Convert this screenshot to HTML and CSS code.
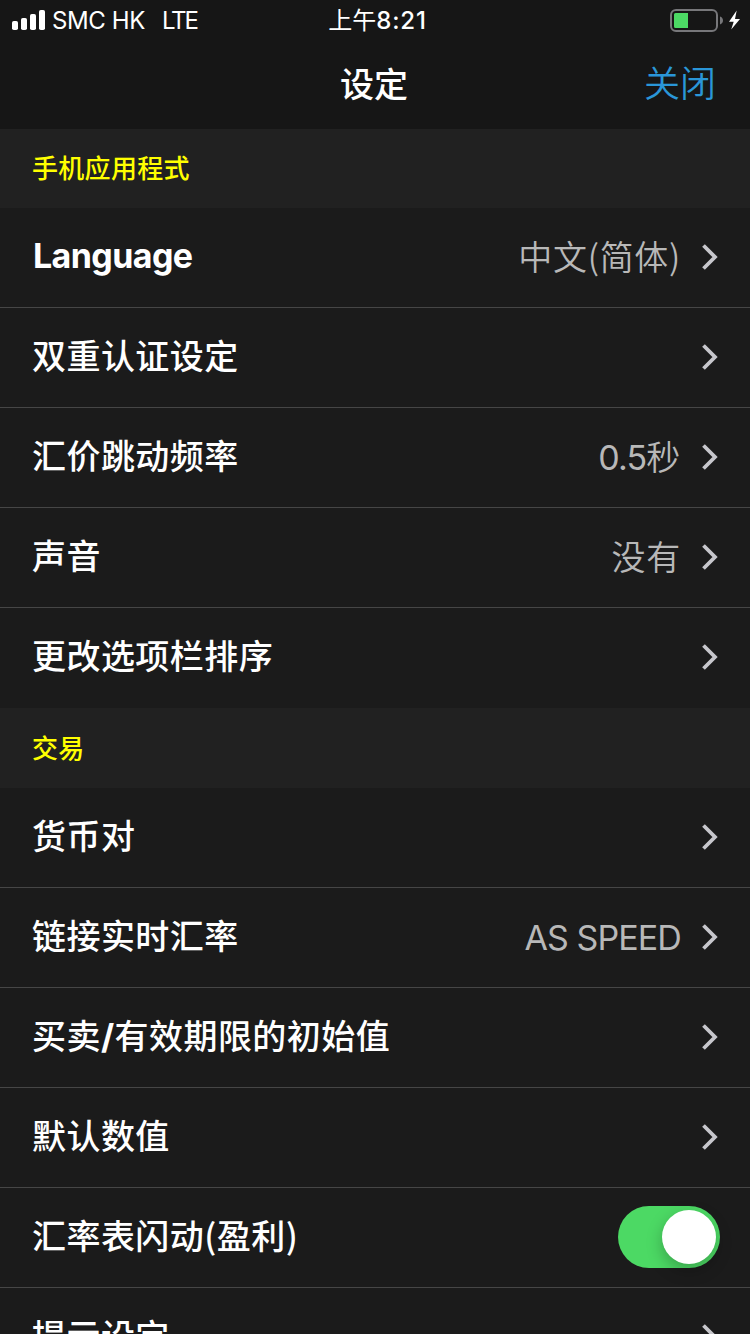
FILE: index.html
```html
<!DOCTYPE html>
<html lang="zh-CN">
<head>
<meta charset="utf-8">
<title>设定</title>
<link rel="stylesheet" href="styles.css">
</head>
<body>
<svg class="defs" width="0" height="0">
  <symbol id="chevron" viewBox="0 0 18 28"><path d="M2.500 2.500 14 14 2.500 25.500" fill="none" stroke="#c7c7cc" stroke-width="3.800"/></symbol>
</svg>
<div class="screen">
  <header class="header">
    <div class="status">
      <div class="status-left">
        <svg class="signal" width="34" height="20" viewBox="0 0 34 20" fill="#fff"><rect x="0" y="11" width="6" height="9" rx="1.800"/><rect x="9" y="8" width="6" height="12" rx="1.800"/><rect x="18" y="4" width="6" height="16" rx="1.800"/><rect x="27" y="0" width="6" height="20" rx="1.800"/></svg>
        <span class="carrier">SMC HK</span>
        <span class="network">LTE</span>
      </div>
      <div class="time"><span class="ampm">上午</span><span class="clock">8:21</span></div>
      <div class="status-right">
        <svg width="72" height="24" viewBox="0 0 72 24"><rect x="1" y="1" width="46" height="21" rx="5" fill="none" stroke="#77777a" stroke-width="2"/><path d="M4 5.500a1.500 1.500 0 0 1 1.500-1.500H18v15H5.500A1.500 1.500 0 0 1 4 17.500Z" fill="#4cd964"/><path d="M50 7.500c1.800.6 3 2.200 3 4s-1.200 3.400-3 4Z" fill="#77777a"/><path d="M66.700 1.500 59 12.700h4.700L61.200 20.500 70 10h-5Z" fill="#fff"/></svg>
      </div>
    </div>
    <div class="navbar">
      <span></span>
      <h1 class="title">设定</h1>
      <a class="close">关闭</a>
    </div>
  </header>
  <main>
    <h2 class="section first">手机应用程式</h2>
    <ul class="list">
      <li class="row"><span class="label latin">Language</span><span class="value">中文(简体)</span><svg class="chevron"><use href="#chevron"/></svg></li>
      <li class="row"><span class="label">双重认证设定</span><svg class="chevron"><use href="#chevron"/></svg></li>
      <li class="row"><span class="label">汇价跳动频率</span><span class="value"><span class="number">0.5</span>秒</span><svg class="chevron"><use href="#chevron"/></svg></li>
      <li class="row"><span class="label">声音</span><span class="value">没有</span><svg class="chevron"><use href="#chevron"/></svg></li>
      <li class="row"><span class="label">更改选项栏排序</span><svg class="chevron"><use href="#chevron"/></svg></li>
    </ul>
    <h2 class="section">交易</h2>
    <ul class="list">
      <li class="row"><span class="label">货币对</span><svg class="chevron"><use href="#chevron"/></svg></li>
      <li class="row"><span class="label">链接实时汇率</span><span class="value speed">AS SPEED</span><svg class="chevron"><use href="#chevron"/></svg></li>
      <li class="row"><span class="label">买卖<b class="slash">/</b>有效期限的初始值</span><svg class="chevron"><use href="#chevron"/></svg></li>
      <li class="row"><span class="label">默认数值</span><svg class="chevron"><use href="#chevron"/></svg></li>
      <li class="row"><span class="label">汇率表闪动(盈利)</span><span class="switch"><span class="knob"></span></span></li>
      <li class="row"><span class="label">提示设定</span><svg class="chevron"><use href="#chevron"/></svg></li>
    </ul>
  </main>
</div>
</body>
</html>
```
FILE: styles.css
```css
* { box-sizing: border-box; }
body { margin: 0; background: #1b1b1b; color: #fff; font-family: Inter, "Noto Sans CJK SC", sans-serif; }
.defs { position: absolute; }
.screen { width: 750px; height: 1334px; overflow: hidden; background: #1b1b1b; }
.header { height: 129px; background: #161616; }
.status { display: grid; grid-template-columns: 1fr auto 1fr; align-items: start; height: 40px; padding: 0 8px 0 12px; }
.status-left { display: flex; align-items: flex-start; font-size: 24px; line-height: 42px; font-weight: 400; }
.signal { flex: none; margin-top: 10px; }
.carrier { margin-left: 6px; letter-spacing: -0.4px; }
.network { margin-left: 17px; letter-spacing: -2.1px; }
.time { display: flex; align-items: center; padding-left: 1px; font-size: 24px; line-height: 42px; }
.clock { font-weight: 500; letter-spacing: 0.8px; }
.status-right { display: flex; justify-content: flex-end; padding-top: 9px; }
.navbar { display: grid; grid-template-columns: 1fr auto 1fr; align-items: start; height: 88px; padding: 0 34px; }
.title { margin: 0; padding: 0 2px 0 0; font-size: 34px; font-weight: 500; line-height: 90px; }
.close { justify-self: end; color: #2a96d8; font-family: "Noto Sans CJK SC", sans-serif; font-size: 36px; font-weight: 350; line-height: 82px; }
.section { margin: 0; height: 80px; padding-left: 32px; background: #212121; color: #ff0; font-size: 26px; font-weight: 500; line-height: 82px; letter-spacing: 0.3px; }
.first { height: 79px; line-height: 80px; }
.list { margin: 0; padding: 0; list-style: none; }
.row { display: flex; align-items: center; height: 100px; padding: 0 30px 2px 32px; border-bottom: 1px solid #464646; }
.row:last-child { border-bottom-color: transparent; }
.label { flex: 1; height: 97px; font-family: "Noto Sans CJK SC", sans-serif; font-size: 34px; font-weight: 500; line-height: 93px; letter-spacing: 0.45px; }
.latin { padding-left: 1px; font-family: Inter, sans-serif; font-weight: 650; letter-spacing: -0.6px; line-height: 96px; }
.slash { font-family: Inter, sans-serif; }
.value { margin-right: 20px; color: #b8b8b8; font-family: "Noto Sans CJK SC", sans-serif; font-size: 34px; font-weight: 350; line-height: 96px; height: 97px; letter-spacing: 0.7px; }
.number { font-family: Inter, sans-serif; font-weight: 400; letter-spacing: -0.8px; }
.speed { font-family: Inter, sans-serif; font-weight: 400; line-height: 99px; letter-spacing: -0.9px; }
.chevron { width: 18px; height: 28px; margin-right: 1px; }
.switch { width: 102px; height: 62px; padding: 4px; border-radius: 31px; background: #4cd964; display: flex; justify-content: flex-end; }
.knob { width: 54px; height: 54px; border-radius: 50%; background: #fff; box-shadow: 0 6px 16px rgba(0,0,0,.25); }
```
